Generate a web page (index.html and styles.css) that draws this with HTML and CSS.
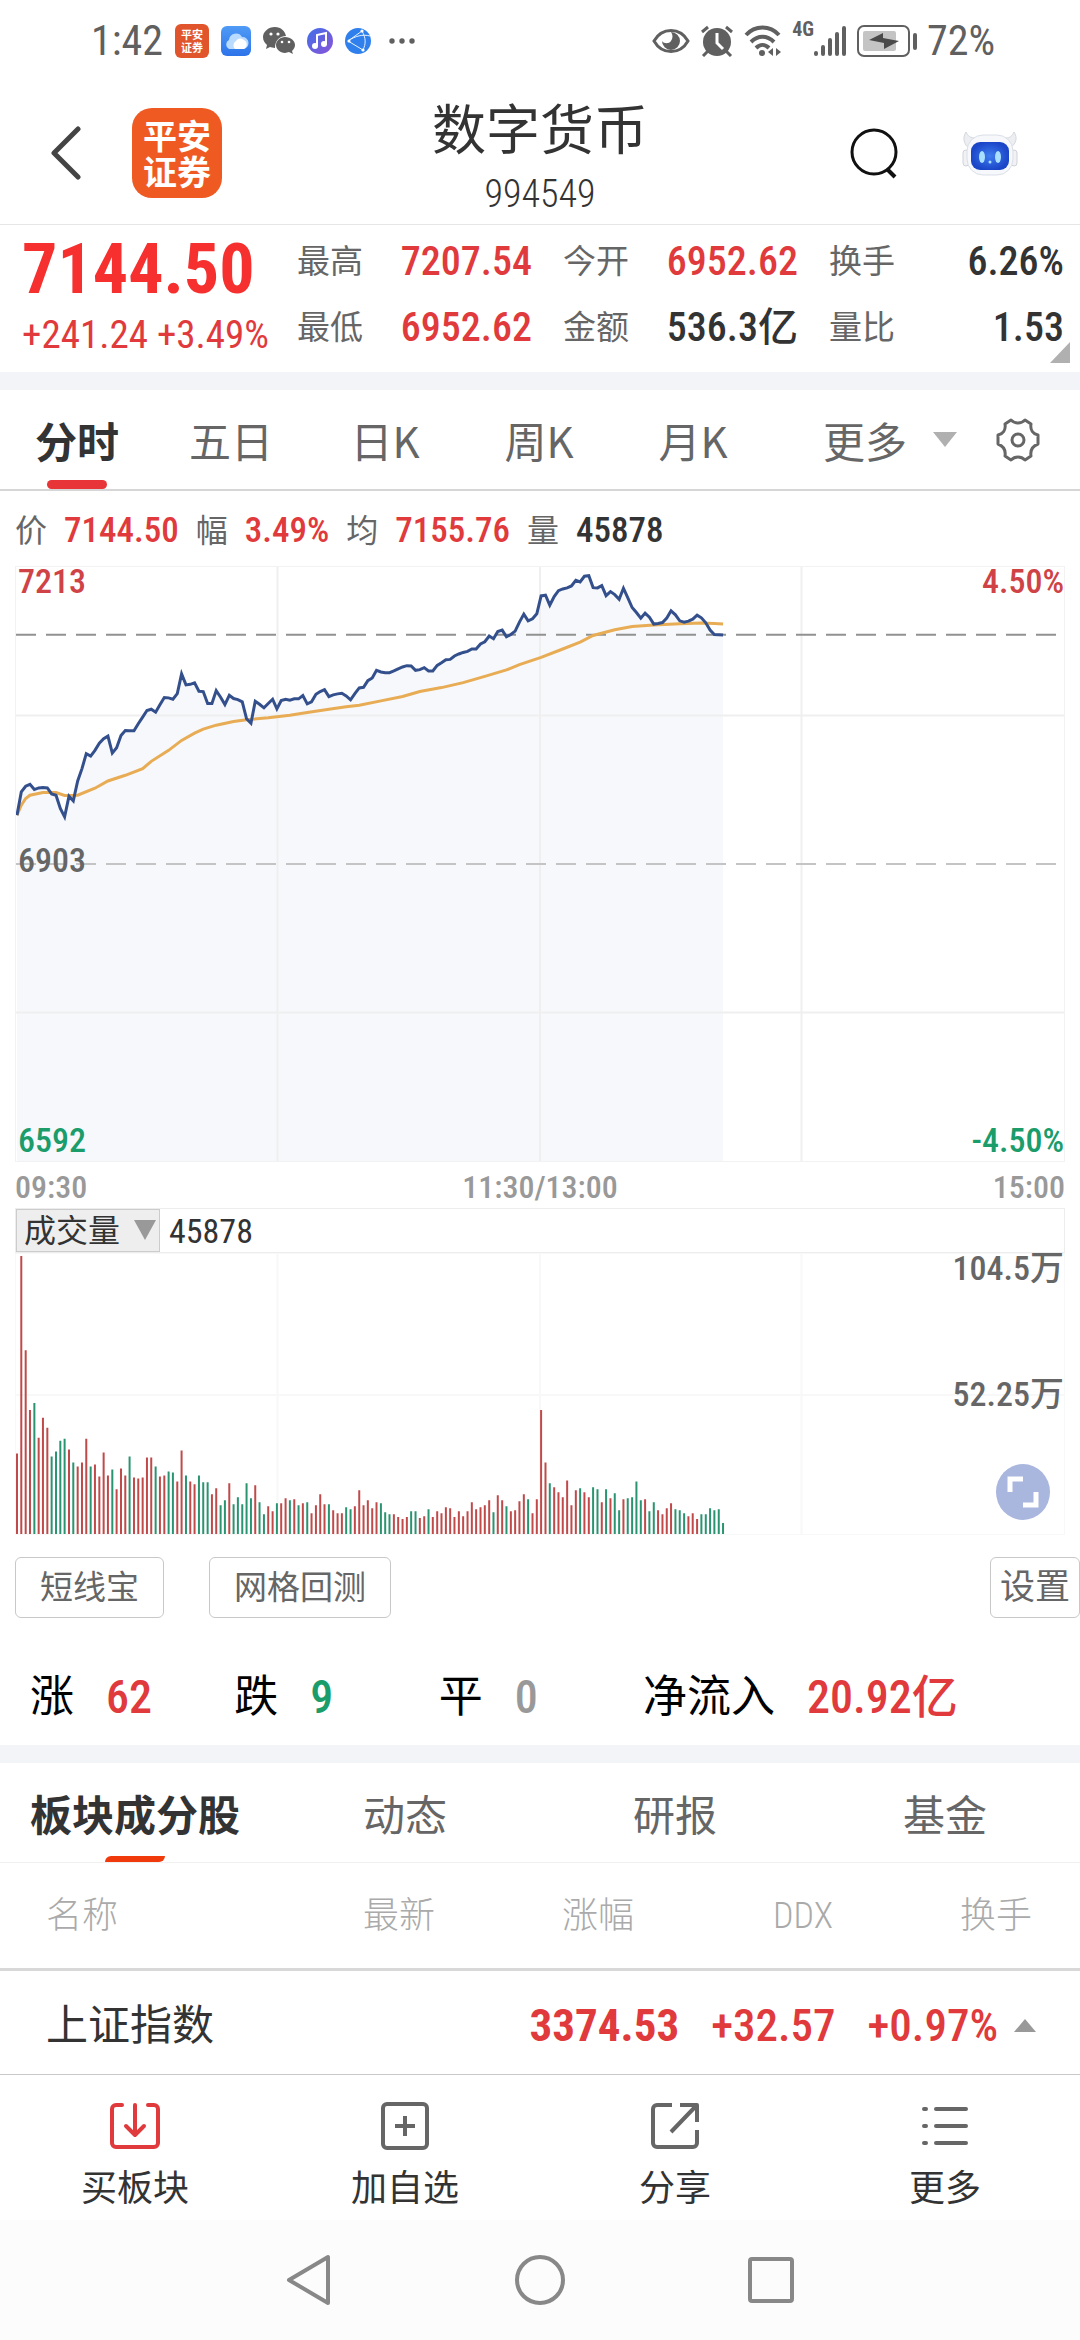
FILE: index.html
```html
<!DOCTYPE html>
<html lang="zh-CN">
<head>
<meta charset="utf-8">
<meta name="viewport" content="width=device-width, initial-scale=1">
<title>数字货币 994549</title>
<link rel="stylesheet" href="styles.css">
</head>
<body>
<div class="status">
  <span class="status-time">1:42</span>
  <div class="status-apps">
    <span class="brand brand-small">平安<br>证券</span>
    <svg width="30" height="30" viewBox="0 0 30 30"><defs><linearGradient id="cloud" x2="0" y2="1"><stop stop-color="#4f9bf5"/><stop offset="1" stop-color="#2d74ea"/></linearGradient></defs><rect width="30" height="30" rx="6" fill="url(#cloud)"/><path d="M8 23a5 5 0 0 1 0-9 7 7 0 0 1 13-3 6 6 0 0 1 1 12z" fill="#b9dbff"/><path d="M14 23a5 5 0 0 1 1-8 5 5 0 0 1 8-1 5 5 0 0 1 0 9z" fill="#fff"/></svg>
    <svg width="32" height="30" viewBox="0 0 32 30" fill="#606060"><path d="M12 1C5 1 0 6 0 11c0 4 2 6 4 8l-1 4 4-2c1 0 3 1 5 1 0-8 5-12 11-12C22 5 18 1 12 1z"/><path d="M22 11c-5 0-9 4-9 8s4 8 9 8l4-1 4 2-1-3c2-2 3-4 3-6 0-4-4-8-10-8z"/><g fill="#fff"><circle cx="8" cy="8" r="1.6"/><circle cx="15" cy="8" r="1.6"/><circle cx="19" cy="16" r="1.3"/><circle cx="26" cy="16" r="1.3"/></g></svg>
    <svg width="26" height="28" viewBox="0 0 26 28"><defs><linearGradient id="music" x2="1" y2="1"><stop stop-color="#3f6fe8"/><stop offset="1" stop-color="#8a54d8"/></linearGradient></defs><ellipse cx="13" cy="14" rx="13" ry="13" fill="url(#music)"/><path d="M10 19V8l9-2v11" fill="none" stroke="#fff" stroke-width="2"/><circle cx="8" cy="19" r="3" fill="#fff"/><circle cx="17" cy="17" r="3" fill="#fff"/></svg>
    <svg width="26" height="28" viewBox="0 0 26 28"><circle cx="13" cy="14" r="13" fill="#2f80ed"/><path d="M3 14L17 4M3 14l15 9M3 14C10 9 18 7 25 9M17 4c4 7 4 13 1 19" fill="none" stroke="#e7f2ff"/><circle cx="4" cy="14" r="1.6" fill="#fff"/><circle cx="17" cy="4" r="1.6" fill="#fff"/><circle cx="18" cy="23" r="1.6" fill="#fff"/></svg>
    <svg class="dots" width="26" height="6" viewBox="0 0 26 6" fill="#606060"><circle cx="3" cy="3" r="2.7"/><circle cx="13" cy="3" r="2.7"/><circle cx="23" cy="3" r="2.7"/></svg>
  </div>
  <div class="status-system">
    <svg width="38" height="26" viewBox="0 0 38 26"><path d="M2 13C10-1 28-1 36 13 28 27 10 27 2 13z" fill="none" stroke="#606060" stroke-width="3"/><path d="M19 4a9 9 0 1 1-9 9c2 3 7 3 9 0s2-6 0-9z" fill="#606060"/></svg>
    <svg width="34" height="32" viewBox="0 0 34 32"><circle cx="17" cy="17" r="14" fill="#606060"/><path d="M2 7l6-5M32 7l-6-5M8 26l-5 5M26 26l5 5" stroke="#606060" stroke-width="3"/><path d="M17 8v10l6 6" fill="none" stroke="#fff" stroke-width="3"/></svg>
    <svg width="38" height="32" viewBox="0 0 38 32" fill="none" stroke="#606060" stroke-width="4"><path d="M2 10C11 0 26 0 35 10M7 17c7-7 16-7 23 0M12 23c4-4 9-4 13 0"/><circle cx="18" cy="28" r="3" fill="#606060" stroke="none"/><path d="M29 23v8l-5-4zM32 23v8l5-4z" fill="#606060" stroke="none"/></svg>
    <span class="network">4G</span>
    <svg class="signal" width="33" height="32" viewBox="0 0 33 32" stroke="#606060" stroke-width="4" stroke-linecap="round"><path d="M2 28v1M9 22v7M16 15v14M23 9v20M30 3v26"/></svg>
    <svg width="60" height="32" viewBox="0 0 60 32"><rect x="1" y="1" width="51" height="30" rx="6" fill="none" stroke="#606060" stroke-width="2"/><rect x="6" y="6" width="33" height="20" rx="2" fill="#c4c4c4"/><path d="M12 15l14-7v5l16 3-15 8v-6z" fill="#4a4a4a"/><rect x="56" y="8" width="4" height="17" rx="2" fill="#606060"/></svg>
    <span class="battery-level">72%</span>
  </div>
</div>

<header class="header">
  <div class="header-side">
    <button class="plain" aria-label="返回"><svg width="34" height="54" viewBox="0 0 34 54"><path d="M28 3L4 27l24 24" fill="none" stroke="#444" stroke-width="5" stroke-linecap="round" stroke-linejoin="round"/></svg></button>
    <span class="brand">平安<br>证券</span>
  </div>
  <div class="header-title">
    <h1>数字货币</h1>
    <span class="code">994549</span>
  </div>
  <div class="header-side header-actions">
    <button class="plain" aria-label="搜索"><svg width="50" height="54" viewBox="0 0 50 54" fill="none" stroke="#111"><circle cx="24" cy="26" r="22" stroke-width="3"/><path d="M37 43l8 8" stroke-width="4"/></svg></button>
    <button class="plain" aria-label="智能助手"><svg width="56" height="46" viewBox="0 0 56 46"><defs><radialGradient id="face"><stop stop-color="#3f7df0"/><stop offset="1" stop-color="#1b46c8"/></radialGradient></defs><path d="M4 2C0 8 2 15 8 19l40-1c6-4 8-10 4-16-2 4-4 6-8 6H14C8 8 6 6 4 2z" fill="#eceef2" stroke="#d4d7de"/><rect x="1" y="20" width="6" height="16" rx="3" fill="#f2f2f5" stroke="#cfd2d8"/><rect x="49" y="20" width="6" height="16" rx="3" fill="#f2f2f5" stroke="#cfd2d8"/><rect x="5" y="5" width="46" height="40" rx="16" fill="#f7f8fb" stroke="#dadfe8"/><rect x="9" y="12" width="38" height="28" rx="9" fill="url(#face)"/><ellipse cx="20" cy="27" rx="3" ry="6" fill="#a9e0ff"/><ellipse cx="36" cy="27" rx="3" ry="6" fill="#a9e0ff"/><circle cx="28" cy="32" r="1.5" fill="#a9e0ff"/></svg></button>
  </div>
</header>

<section class="quote">
  <div class="quote-main">
    <strong class="price">7144.50</strong>
    <span class="change">+241.24 +3.49%</span>
  </div>
  <dl class="quote-grid">
    <div><dt>最高</dt><dd class="up">7207.54</dd></div>
    <div><dt>今开</dt><dd class="up">6952.62</dd></div>
    <div><dt>换手</dt><dd>6.26%</dd></div>
    <div><dt>最低</dt><dd class="up">6952.62</dd></div>
    <div><dt>金额</dt><dd>536.3亿</dd></div>
    <div><dt>量比</dt><dd>1.53</dd></div>
  </dl>
  <svg class="corner" width="20" height="21" viewBox="0 0 20 21"><path d="M20 0v21H0z" fill="#b0b0b0"/></svg>
</section>

<nav class="periods">
  <button class="plain active">分时</button>
  <button class="plain">五日</button>
  <button class="plain">日K</button>
  <button class="plain">周K</button>
  <button class="plain">月K</button>
  <button class="plain more">更多<svg width="24" height="15" viewBox="0 0 24 15"><path d="M0 0h24L12 15z" fill="#b0b0b0"/></svg></button>
  <button class="plain" aria-label="图表设置"><svg width="44" height="44" viewBox="0 0 44 44" fill="none" stroke="#666" stroke-width="3" stroke-linejoin="round"><path d="M15 2c4 4 10 4 14 0l6 4c-1 6 2 10 7 11v9c-5 2-8 6-7 12l-6 4c-4-4-10-4-14 0l-6-4c1-6-2-10-7-12v-9c5-1 8-5 7-11z"/><circle cx="22" cy="22" r="6"/></svg></button>
</nav>

<p class="readout">
  <span>价</span><b class="up">7144.50</b>
  <span>幅</span><b class="up">3.49%</b>
  <span>均</span><b class="up">7155.76</b>
  <span>量</span><b>45878</b>
</p>

<main class="charts">
  <div class="price-chart">
    <svg class="plot" id="price-plot" viewBox="0 0 1050 596" preserveAspectRatio="none" fill="none">
      <path class="area" id="area"/>
      <path class="grid" d="M0 149H1050M0 447H1050M262 0V596M525 0V596M787 0V596"/>
      <path class="dash-dark" d="M0 68H1050"/>
      <path class="dash-light" d="M0 298H1050"/>
      <polyline class="average-line" id="average-line"/>
      <polyline class="price-line" id="price-line"/>
    </svg>
    <span class="mark top left up">7213</span>
    <span class="mark top right up">4.50%</span>
    <span class="mark middle left">6903</span>
    <span class="mark bottom left down">6592</span>
    <span class="mark bottom right down">-4.50%</span>
  </div>
  <div class="times"><span>09:30</span><span>11:30/13:00</span><span>15:00</span></div>
  <div class="volume-head">
    <label class="indicator">
      <select aria-label="指标"><option>成交量</option></select>
      <svg width="22" height="20" viewBox="0 0 22 20"><path d="M0 0h22L11 20z" fill="#999"/></svg>
    </label>
    <span class="volume-now">45878</span>
  </div>
  <div class="volume-chart">
    <svg class="plot" viewBox="0 0 1050 282" preserveAspectRatio="none" fill="none">
      <path class="grid-faint" d="M0 142H1050M262 0V282M525 0V282M787 0V282"/>
      <path class="bar-up" id="bars-up"/>
      <path class="bar-down" id="bars-down"/>
    </svg>
    <span class="mark top right">104.5万</span>
    <span class="mark half right">52.25万</span>
    <button class="plain expand" aria-label="全屏"><svg width="54" height="56" viewBox="0 0 54 56"><ellipse cx="27" cy="28" rx="27" ry="28" fill="#a9b6de"/><path d="M14 28V15h13M40 28v13H27" fill="none" stroke="#fff" stroke-width="5"/></svg></button>
  </div>
</main>

<div class="tools">
  <button class="tool">短线宝</button>
  <button class="tool">网格回测</button>
  <button class="tool tool-settings">设置</button>
</div>

<dl class="breadth">
  <div><dt>涨</dt><dd class="up">62</dd></div>
  <div><dt>跌</dt><dd class="down">9</dd></div>
  <div><dt>平</dt><dd class="flat">0</dd></div>
  <div><dt>净流入</dt><dd class="up">20.92亿</dd></div>
</dl>

<nav class="sections">
  <button class="plain active">板块成分股</button>
  <button class="plain">动态</button>
  <button class="plain">研报</button>
  <button class="plain">基金</button>
</nav>

<div class="constituents">
  <table>
    <thead><tr><th class="name">名称</th><th>最新</th><th>涨幅</th><th>DDX</th><th>换手</th></tr></thead>
  </table>
</div>

<section class="index">
  <span class="index-name">上证指数</span>
  <b>3374.53</b><span class="up">+32.57</span><span class="up">+0.97%</span>
  <svg width="22" height="13" viewBox="0 0 22 13"><path d="M11 0l11 13H0z" fill="#999"/></svg>
</section>

<nav class="actions">
  <button class="plain"><svg width="50" height="48" viewBox="0 0 50 48" fill="none" stroke="#e03a3c" stroke-width="4" stroke-linecap="round" stroke-linejoin="round"><path d="M12 3H6a4 4 0 0 0-4 4v34a4 4 0 0 0 4 4h38a4 4 0 0 0 4-4V7a4 4 0 0 0-4-4h-6M25 3v29M16 24l9 9 9-9"/></svg>买板块</button>
  <button class="plain"><svg width="50" height="48" viewBox="0 0 50 48" fill="none" stroke="#666" stroke-width="4"><rect x="3" y="2" width="44" height="44" rx="4"/><path d="M25 14v20M15 24h20"/></svg>加自选</button>
  <button class="plain"><svg width="50" height="48" viewBox="0 0 50 48" fill="none" stroke="#666" stroke-width="4" stroke-linejoin="round"><path d="M22 3H7a4 4 0 0 0-4 4v34a4 4 0 0 0 4 4h36a4 4 0 0 0 4-4V28M21 30L46 4M30 3h17v17"/></svg>分享</button>
  <button class="plain"><svg width="50" height="48" viewBox="0 0 50 48" fill="none" stroke="#666" stroke-width="4" stroke-linecap="round"><path d="M4 7h2M4 24h2M4 41h2M16 7h30M16 24h30M16 41h30"/></svg>更多</button>
</nav>

<nav class="system">
  <button class="plain" aria-label="后退"><svg width="46" height="52" viewBox="0 0 46 52"><path d="M42 3v46L3 26z" fill="none" stroke="#888" stroke-width="4" stroke-linejoin="round"/></svg></button>
  <button class="plain" aria-label="主页"><svg width="52" height="52" viewBox="0 0 52 52"><circle cx="26" cy="26" r="23" fill="none" stroke="#888" stroke-width="4"/></svg></button>
  <button class="plain" aria-label="最近任务"><svg width="46" height="46" viewBox="0 0 46 46"><rect x="2" y="2" width="42" height="42" rx="2" fill="none" stroke="#888" stroke-width="4"/></svg></button>
</nav>
<script src="chart.js"></script>
</body>
</html>
```
FILE: styles.css
```css
* { box-sizing: border-box; }

body {
  margin: 0;
  min-height: 100vh;
  display: flex;
  flex-direction: column;
  background: #fff;
  color: #333;
  font-family: "Roboto Condensed", Roboto, "Noto Sans CJK SC", sans-serif;
  font-size: 36px;
  line-height: 1;
}

h1, p, dl, dd { margin: 0; }
svg { display: block; flex: none; }

.plain {
  display: flex;
  align-items: center;
  justify-content: center;
  margin: 0;
  padding: 0;
  border: 0;
  background: none;
  color: inherit;
  font: inherit;
}

.up { color: #e03a3c; }
.down { color: #1a9c6b; }
.flat { color: #999; }

/* Status bar */
.status {
  display: flex;
  align-items: center;
  min-height: 76px;
  padding: 6px 85px 0 91px;
  color: #606060;
}
.status-time, .battery-level { font-size: 42px; line-height: 44px; }
.status-apps {
  display: flex;
  align-items: center;
  gap: 12px;
  margin-left: 12px;
}
.dots { margin-left: 6px; }
.status-system {
  display: flex;
  align-items: center;
  gap: 10px;
  margin-left: auto;
}
.network { align-self: flex-start; font-size: 20px; font-weight: 700; }
.signal { margin-left: -10px; }

.brand {
  display: flex;
  align-items: center;
  justify-content: center;
  width: 90px;
  height: 90px;
  border-radius: 20px;
  background: #ef5a22;
  color: #fff;
  font-family: "Noto Sans CJK SC", sans-serif;
  font-size: 34px;
  font-weight: 700;
  line-height: 36px;
}
.brand-small {
  width: 34px;
  height: 34px;
  border-radius: 6px;
  background: #e0552b;
  font-size: 11px;
  line-height: 13px;
}

/* Header */
.header {
  display: grid;
  grid-template-columns: 1fr auto 1fr;
  align-items: center;
  min-height: 149px;
  padding: 6px 62px 0 50px;
  border-bottom: 1px solid #e6e6e6;
}
.header-side { display: flex; align-items: center; gap: 48px; }
.header-actions { justify-content: flex-end; gap: 62px; }
.header-title { text-align: center; padding: 12px 0 0 12px; }
.header-title h1 { font-size: 54px; font-weight: 400; line-height: 64px; }
.code { display: block; margin-top: 6px; font-size: 38px; font-weight: 300; line-height: 48px; }

/* Quote summary */
.quote {
  position: relative;
  display: grid;
  grid-template-columns: 275px 1fr;
  min-height: 147px;
  padding: 10px 16px 5px 22px;
}
.quote-main { display: flex; flex-direction: column; gap: 8px; color: #e03a3c; }
.price { color: #f5302f; font-size: 70px; line-height: 68px; }
.change { font-size: 39px; line-height: 48px; white-space: nowrap; }
.quote-grid {
  display: grid;
  grid-template-columns: repeat(3, 1fr);
  grid-auto-rows: 66px;
  column-gap: 31px;
}
.quote-grid div {
  display: flex;
  align-items: flex-start;
  justify-content: space-between;
}
.quote-grid dt { color: #666; font-size: 33px; line-height: 54px; }
.quote-grid dd { font-size: 40px; font-weight: 500; line-height: 54px; }
.corner { position: absolute; right: 10px; bottom: 9px; }

/* Chart period tabs */
.periods {
  display: grid;
  grid-template-columns: repeat(5, 1fr) 210px 76px;
  min-height: 119px;
  padding-right: 24px;
  border-top: 18px solid #f2f4f8;
  border-bottom: 2px solid #d6d6d6;
  color: #666;
  font-family: "Noto Sans CJK SC", sans-serif;
  font-size: 42px;
}
.periods .more { gap: 26px; padding-left: 30px; }
.active { position: relative; color: #333; font-weight: 700; }
.active::after {
  content: "";
  position: absolute;
  bottom: 0;
  left: 50%;
  width: 60px;
  height: 9px;
  margin-left: -30px;
  border-radius: 5px;
  background: #e83538;
}

.readout {
  display: flex;
  align-items: center;
  gap: 17px;
  min-height: 75px;
  padding: 4px 15px 0;
}
.readout span { color: #666; font-size: 32px; }
.readout b { font-size: 35px; font-weight: 500; }

/* Charts */
.charts { padding: 0 15px; }
.price-chart, .volume-chart { position: relative; border: 1px solid #f2f2f2; }
.price-chart { height: 596px; }
.volume-chart { height: 282px; border-color: #f8f8f8; }
.plot { width: 100%; height: 100%; }
.plot path, .plot polyline { vector-effect: non-scaling-stroke; }
.area { fill: #f6f8fb; }
.grid { stroke: #efefef; stroke-width: 2; }
.grid-faint { stroke: #f8f8f8; stroke-width: 2; }
.dash-dark { stroke: #919191; stroke-width: 2; stroke-dasharray: 20 10; }
.dash-light { stroke: #c4c4c4; stroke-width: 2; stroke-dasharray: 20 10; }
.price-line { stroke: #34508c; stroke-width: 3; }
.average-line { stroke: #e8ac55; stroke-width: 3; }
.bar-up { stroke: #c04a4a; stroke-width: 2; }
.bar-down { stroke: #2a9470; stroke-width: 2; }

.mark {
  position: absolute;
  color: #666;
  font-size: 34px;
  font-weight: 500;
  line-height: 34px;
}
.mark.up { color: #cf4246; }
.mark.down { color: #1a9c6b; }
.left { left: 2px; }
.right { right: 0; }
.top { top: -3px; }
.middle { top: 276px; }
.half { top: 123px; }
.bottom { bottom: 4px; }

.times {
  display: flex;
  align-items: center;
  justify-content: space-between;
  min-height: 46px;
  padding-top: 4px;
  color: #999;
  font-size: 32px;
  font-weight: 500;
}
.volume-head {
  display: flex;
  align-items: center;
  min-height: 45px;
  border: 1px solid #ededed;
}
.indicator { position: relative; align-self: stretch; display: flex; }
.indicator select {
  appearance: none;
  width: 144px;
  padding: 0 7px;
  border: 1px solid #ccc;
  border-radius: 0;
  background: #eee;
  color: #333;
  font: inherit;
  font-size: 32px;
}
.indicator svg { position: absolute; right: 4px; top: 11px; pointer-events: none; }
.volume-now { margin-left: 9px; font-size: 34px; }
.expand { position: absolute; right: 14px; bottom: 14px; }

/* Tools */
.tools { display: flex; align-items: center; padding: 22px 0 0 15px; gap: 45px; }
.tool {
  min-height: 61px;
  padding: 0 24px;
  border: 1px solid #c8c8c8;
  border-radius: 6px;
  background: #fff;
  color: #666;
  font: inherit;
  font-size: 33px;
}
.tool-settings { margin-left: auto; padding: 0 9px; font-size: 35px; }

.breadth {
  display: grid;
  grid-template-columns: repeat(3, 1fr) 437px;
  min-height: 127px;
  padding: 30px 0 0 30px;
}
.breadth div { display: flex; align-items: center; gap: 32px; }
.breadth dt { color: #000; font-size: 44px; }
.breadth dd { font-size: 46px; font-weight: 500; }

/* Section tabs */
.sections {
  display: grid;
  grid-template-columns: repeat(4, 1fr);
  min-height: 118px;
  border-top: 18px solid #f2f4f8;
  border-bottom: 1px solid #f0f0f0;
  color: #666;
  font-size: 42px;
}
.sections .plain { padding-top: 8px; }
.sections .active::after {
  height: 6px;
  border-radius: 6px 0 6px 0;
  background: #f03a0c;
}

.constituents { padding: 0 48px 0 46px; }
.constituents table { width: 100%; table-layout: fixed; border-collapse: collapse; }
.constituents th {
  padding: 0;
  height: 105px;
  color: #aaa;
  font-size: 36px;
  font-weight: 300;
  text-align: right;
}
.constituents .name { width: 190px; text-align: left; }

.index {
  display: flex;
  align-items: center;
  gap: 32px;
  min-height: 107px;
  padding: 6px 44px 0 46px;
  border-top: 3px solid #d8d8d8;
  border-bottom: 1px solid #c8c8c8;
  font-size: 42px;
}
.index-name { margin-right: auto; }
.index b { color: #e03a3c; font-size: 45px; }
.index .up { font-size: 45px; font-weight: 500; }
.index svg { margin-left: -16px; }

.actions {
  display: grid;
  grid-template-columns: repeat(4, 1fr);
  min-height: 145px;
}
.actions .plain { flex-direction: column; gap: 21px; padding-top: 14px; }

.system {
  flex: 1;
  display: flex;
  align-items: center;
  justify-content: center;
  gap: 182px;
  min-height: 120px;
  background: #fcfcfc;
}
```
FILE: chart.js
```js
// Minute data. Levels are thirds of a pixel below the 7213 line.
const STEP = 4.34;
const price = [
  765,695,678,672,688,683,682,683,701,705,745,770,708,722,662,625,580,587,570,548,
  535,527,578,562,525,510,511,511,490,470,450,446,455,433,411,412,416,399,340,373,
  371,367,392,393,429,429,390,410,432,404,414,417,424,475,488,422,431,442,429,416,
  445,420,416,419,415,415,405,430,424,401,393,387,408,403,400,398,406,418,399,382,
  380,360,352,329,334,336,336,331,325,319,315,316,329,327,321,331,331,314,306,297,
  296,286,280,275,272,265,265,250,243,226,234,212,208,228,221,211,184,160,180,174,
  159,105,103,133,107,89,84,81,75,58,63,46,44,80,81,74,104,92,101,115,
  82,110,140,155,172,157,169,190,188,185,172,150,162,180,184,181,175,163,171,186,
  208,221,222,223
];
const average = [
  [0,765],[1,735],[2,715],[3,705],[6,697],[9,697],[11,706],[14,705],[18,684],[21,662],
  [25,645],[29,625],[31,603],[35,570],[38,540],[41,518],[43,506],[46,494],[50,483],
  [53,478],[58,472],[63,464],[67,456],[72,446],[76,439],[79,434],[84,421],[89,408],
  [93,393],[98,381],[103,366],[108,347],[113,328],[116,312],[121,290],[126,265],
  [130,244],[133,224],[138,207],[142,197],[147,193],[153,189],[158,187],[161,188],[163,190]
];
// Volume per minute: positive closes up, negative closes down.
const volume = [
  243,840,555,375,-396,291,351,321,-234,-249,-282,-288,255,-216,204,216,288,-204,210,174,
  246,177,-195,135,198,177,-234,171,168,171,231,231,-204,174,177,-189,-186,159,252,-177,
  159,150,-177,-156,-156,120,138,-87,-102,153,-90,-111,-90,-153,-108,147,-96,-60,84,69,
  -93,93,108,-102,105,-87,93,-96,63,87,120,90,-90,72,63,63,-81,-75,84,132,
  87,102,78,96,-93,-66,-60,60,51,45,51,-69,-69,48,54,-75,51,69,63,81,
  78,51,69,54,69,96,75,81,87,102,-66,117,102,-84,69,72,99,120,-105,63,
  105,375,216,-153,141,126,111,162,87,132,-138,126,111,-141,-135,96,-135,108,-123,-72,
  105,-108,-111,-159,-102,105,-69,-96,72,60,78,93,-75,-72,-63,54,63,45,-60,-60,
  -78,-72,-75,-33
];

const point = (minute, level) => `${(minute * STEP + 1).toFixed(1)},${((level - 18) / 3).toFixed(1)}`;
const line = price.map((level, i) => point(i, level)).join(" ");
document.getElementById("price-line").setAttribute("points", line);
document.getElementById("average-line").setAttribute("points", average.map(p => point(p[0], p[1])).join(" "));
document.getElementById("area").setAttribute("d", `M${line} V596 H1 Z`);

const bars = sign => volume
  .map((v, i) => v * sign > 0 ? `M${(i * STEP + 1).toFixed(1)} 282v${(-Math.abs(v) / 3).toFixed(1)}` : "")
  .join("");
document.getElementById("bars-up").setAttribute("d", bars(1));
document.getElementById("bars-down").setAttribute("d", bars(-1));
```
